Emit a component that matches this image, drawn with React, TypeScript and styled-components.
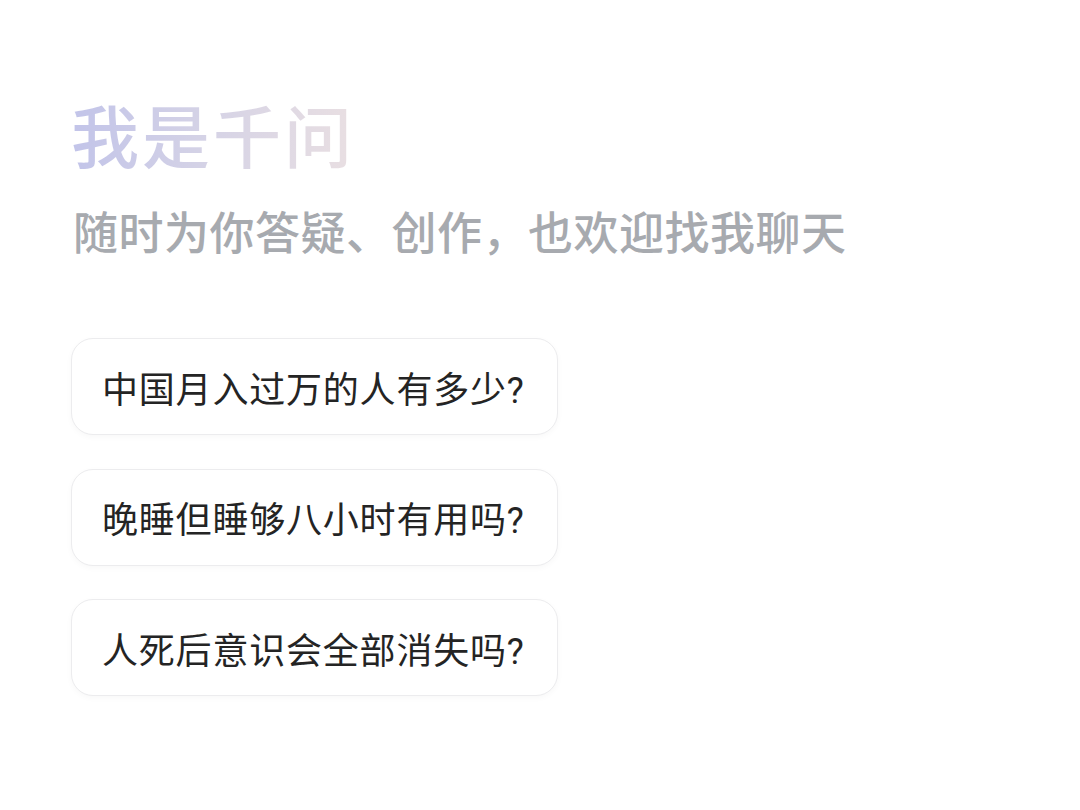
import React from "react";
import styled, { createGlobalStyle } from "styled-components";

const GlobalStyle = createGlobalStyle`
  html, body {
    margin: 0;
    padding: 0;
    background: #ffffff;
  }
  body {
    font-family: "Noto Sans CJK SC", "Noto Sans", sans-serif;
  }
`;

const Page = styled.main`
  width: 1080px;
  height: 810px;
  box-sizing: border-box;
  padding: 90px 0 0 71px;
  display: flex;
  flex-direction: column;
  background: #ffffff;
`;

const Title = styled.h1`
  margin: 0;
  font-size: 68px;
  line-height: 88px;
  font-weight: 500;
  letter-spacing: 3px;
  width: fit-content;
  background: linear-gradient(90deg, #c2c4e9 0%, #d4d2e6 45%, #e9dfe2 100%);
  -webkit-background-clip: text;
  background-clip: text;
  color: transparent;
`;

const Subtitle = styled.p`
  margin: 23px 0 0 2px;
  font-size: 45px;
  line-height: 60px;
  font-weight: 500;
  color: #a7aaaf;
  letter-spacing: 0.5px;
`;

const Suggestions = styled.div`
  margin-top: 77px;
  display: flex;
  flex-direction: column;
  gap: 33.5px;
`;

const Card = styled.button`
  width: 487px;
  height: 97px;
  box-sizing: border-box;
  display: flex;
  align-items: center;
  padding: 0 0 0 30px;
  background: #ffffff;
  border: 1.5px solid #ececee;
  border-radius: 22px;
  box-shadow: 0 2px 6px rgba(0, 0, 0, 0.03);
  font-family: Roboto, "Noto Sans CJK SC", "Noto Sans", sans-serif;
  font-size: 36px;
  font-weight: 400;
  letter-spacing: 0.8px;
  color: #242424;
  text-align: left;
  cursor: pointer;
`;

const questions = [
  "中国月入过万的人有多少?",
  "晚睡但睡够八小时有用吗?",
  "人死后意识会全部消失吗?",
];

export default function App() {
  return (
    <>
      <GlobalStyle />
      <Page>
        <Title>我是千问</Title>
        <Subtitle>随时为你答疑、创作，也欢迎找我聊天</Subtitle>
        <Suggestions>
          {questions.map((q) => (
            <Card key={q}>{q}</Card>
          ))}
        </Suggestions>
      </Page>
    </>
  );
}
